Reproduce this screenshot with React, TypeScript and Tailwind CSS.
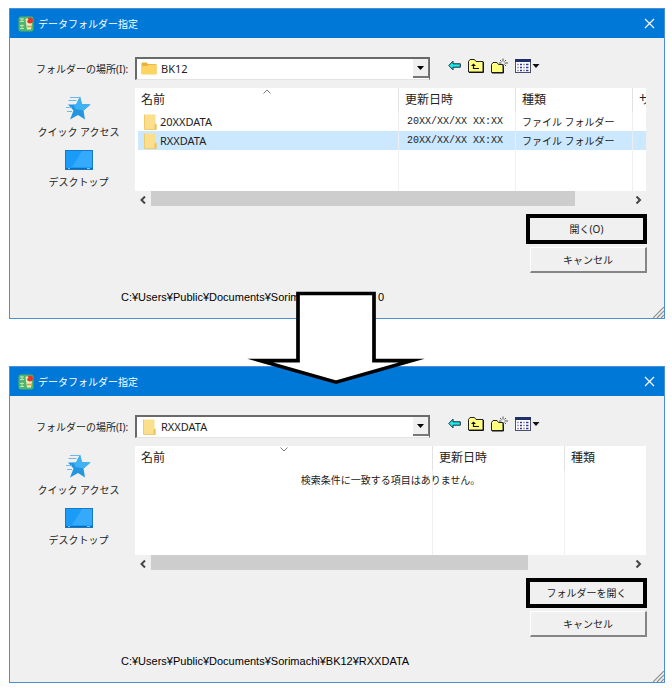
import { useId } from 'react'
import type { ReactNode } from 'react'

type Column = { label: string; width: string; sort?: 'up' | 'down' }
type Row = { name: string; date: string; type: string; selected?: boolean }

const firstColumns: Column[] = [
  { label: '名前', width: 'w-[263px]', sort: 'up' },
  { label: '更新日時', width: 'w-[117px]' },
  { label: '種類', width: 'w-[117px]' },
  { label: 'サ', width: 'w-auto' },
]

const secondColumns: Column[] = [
  { label: '名前', width: 'w-[297px]', sort: 'down' },
  { label: '更新日時', width: 'w-[132px]' },
  { label: '種類', width: 'w-auto' },
]

const rows: Row[] = [
  { name: '20XXDATA', date: '20XX/XX/XX XX:XX', type: 'ファイル フォルダー' },
  { name: 'RXXDATA', date: '20XX/XX/XX XX:XX', type: 'ファイル フォルダー', selected: true },
]

function AppIcon() {
  return (
    <svg width="16" height="16" viewBox="0 0 16 16" aria-hidden="true">
      <rect x="0.5" y="0.5" width="15" height="15" rx="2.5" fill="#4fb56a" />
      <path d="M2 3h4M2 5.500h4M4 2v4M2 9.500h4M2 12.500h4M4 8.500v4.500" stroke="#b9e6b4" strokeWidth="1" fill="none" />
      <path d="M7.500 3.500h7l-1.500 10h-4z" fill="#e6edbf" />
      <circle cx="12" cy="4.500" r="3" fill="#e0372b" />
      <circle cx="9" cy="3.500" r="1.300" fill="#f3e3a0" />
      <path d="M9 10.500h4.500" stroke="#e79a3c" strokeWidth="1.500" />
    </svg>
  )
}

function FolderIcon() {
  return (
    <svg width="16" height="13" viewBox="0 0 16 13" aria-hidden="true">
      <path d="M0.500 1.500q0-1 1-1h4l1.500 1.500h7.500q1 0 1 1V12h-15z" fill="#e9b23f" />
      <path d="M0.500 4h6l1.200-1.200h7.800V12q0 0.500-0.500 0.500H1q-0.500 0-0.500-0.500z" fill="#fcd462" />
    </svg>
  )
}

function FolderClosedIcon() {
  return (
    <svg width="13" height="16" viewBox="0 0 13 16" aria-hidden="true">
      <path d="M0.500 0.500h11v9l1 1v5h-12z" fill="#fbdf8c" />
      <path d="M11.500 9.500l1 1v5H10.500v-4.500z" fill="#ebc25c" />
      <path d="M0.500 0.500V15.500h12" stroke="#f0cb6c" fill="none" />
    </svg>
  )
}

function StarIcon() {
  return (
    <svg width="26" height="24" viewBox="0 0 26 24" aria-hidden="true">
      <path d="M15 0.500l2 7.500 8.500 0.500-7 6 1.500 9-7-4.500-8 4.500 3.500-9-5.500-6h8z" fill="#2496e0" />
      <path d="M15 0.500l2 7.500 8.500 0.500-7 6-8-1.500-2-4.500h3z" fill="#3fb2f4" />
      <path d="M5 1.500h9M3.500 4.500h8M1 11.500h6M2 15.500h5" stroke="#6bb9e8" strokeWidth="1" />
    </svg>
  )
}

function DesktopIcon() {
  return (
    <svg width="28" height="20" viewBox="0 0 28 20" aria-hidden="true">
      <rect x="0.500" y="0.500" width="27" height="19" fill="#1a9bf8" stroke="#1679c4" />
      <path d="M17 1h10v16H7z" fill="#35a9fb" />
      <path d="M1 18.500h26" stroke="#1269ad" strokeWidth="1" />
      <path d="M3 18.500h2M22 18.500h3" stroke="#78c6fa" strokeWidth="1" />
    </svg>
  )
}

function BackIcon() {
  return (
    <svg width="13" height="11" viewBox="0 0 13 11" aria-hidden="true">
      <path d="M0.800 5.500L5 1.200v2.600h7.300v3.400H5v2.600z" fill="#1feaea" stroke="#102a3a" strokeWidth="1" />
    </svg>
  )
}

function UpIcon() {
  return (
    <svg width="16" height="14" viewBox="0 0 16 14" aria-hidden="true">
      <path d="M0.500 13V2.500L2 0.500h4.500L8 2.500h7v10.500z" fill="#ffff80" stroke="#222" />
      <path d="M1 13.500h14.500V3" stroke="#111" fill="none" />
      <path d="M5.500 5v4.500H11" stroke="#111" strokeWidth="1.200" fill="none" />
      <path d="M3 7l2.500-2.500L8 7z" fill="#111" />
    </svg>
  )
}

function NewFolderIcon() {
  return (
    <svg width="17" height="16" viewBox="0 0 17 16" aria-hidden="true">
      <path d="M0.500 14.500V6.500L2 4.500h4l1.500 2h4.500v8z" fill="#ffff80" stroke="#222" />
      <path d="M1 15h11.500V7" stroke="#111" fill="none" />
      <path d="M12 0.500v3M12 6.500v3M8 5h2.500M13.500 5H17M9 2l1.500 1.500M15 2l-1.500 1.500M13.500 6.500L15 8" stroke="#555" strokeWidth="1" />
    </svg>
  )
}

function ViewsIcon() {
  return (
    <svg width="26" height="14" viewBox="0 0 26 14" aria-hidden="true">
      <rect x="0.500" y="0.500" width="15" height="13" fill="#fff" stroke="#4a5068" />
      <path d="M0 1.500h16" stroke="#1f2f6b" strokeWidth="3" />
      <path d="M2.500 5.500h1M5 5.500h2M8.500 5.500h1M11 5.500h2.500M2.500 8.500h1M5 8.500h2M8.500 8.500h1M11 8.500h2.500M2.500 11.500h1M5 11.500h2M8.500 11.500h1M11 11.500h2.500" stroke="#3a3a90" strokeWidth="1.400" />
      <path d="M17.500 5h7L21 9z" fill="#111" />
    </svg>
  )
}

function SortMark({ direction }: { direction: 'up' | 'down' }) {
  return (
    <svg className="absolute left-1/2 top-px -translate-x-1/2" width="9" height="5" viewBox="0 0 9 5" aria-hidden="true">
      <path d={direction === 'up' ? 'M1 4.500l3.500-3.500 3.500 3.500' : 'M1 0.500l3.500 3.500 3.500-3.500'} fill="none" stroke="#777" />
    </svg>
  )
}

function LocationSelect({ id, value, icon }: { id: string; value: string; icon: ReactNode }) {
  return (
    <div className="relative w-[295px] shrink-0">
      <select
        id={id}
        className="block h-[23px] w-full appearance-none border-2 border-b border-r border-b-[#e3e3e3] border-r-[#696969] border-l-[#696969] border-t-[#696969] bg-white pl-6 pr-5 text-[11px] leading-4 text-[#222] outline-none"
      >
        <option>{value}</option>
      </select>
      <span className="pointer-events-none absolute inset-y-0 left-1 flex w-5 items-center justify-center">{icon}</span>
      <span className="pointer-events-none absolute bottom-0.5 right-px top-0.5 flex w-4 items-center justify-center border-b-2 border-r border-[#777] bg-[#f0f0f0]">
        <svg width="7" height="4" viewBox="0 0 7 4" aria-hidden="true">
          <path d="M0 0h7L3.500 4z" fill="#000" />
        </svg>
      </span>
    </div>
  )
}

function Toolbar() {
  return (
    <div className="flex items-center gap-[7px] pb-1.5 pl-[18px]">
      <button type="button" aria-label="戻る"><BackIcon /></button>
      <button type="button" aria-label="上へ"><UpIcon /></button>
      <button type="button" aria-label="新規"><NewFolderIcon /></button>
      <button type="button" aria-label="表示"><ViewsIcon /></button>
    </div>
  )
}

function FileList({ columns, items, message }: { columns: Column[]; items: Row[]; message?: string }) {
  return (
    <div className="relative overflow-hidden bg-white">
      <table className="w-full table-fixed border-separate border-spacing-0 text-left">
        <thead>
          <tr className="h-6">
            {columns.map((c, i) => (
              <th
                key={c.label}
                className={`relative overflow-hidden whitespace-nowrap py-0 pl-1.5 pr-0 text-[12px] font-normal leading-4 ${c.width} ${
                  i > 0 ? 'border-l border-[#e2e2e2]' : ''
                }`}
              >
                {c.sort && <SortMark direction={c.sort} />}
                {c.label}
              </th>
            ))}
          </tr>
        </thead>
        <tbody>
          {items.map(item => (
            <tr key={item.name} className={`h-[19px] ${item.selected ? 'bg-[#cce8ff]' : ''}`}>
              <td className="border-l-[3px] border-white py-0 pl-1.5">
                <span className="flex items-center gap-[3px] text-[11px] leading-4">
                  <FolderClosedIcon />
                  {item.name}
                </span>
              </td>
              <td className="whitespace-nowrap border-l border-[#eee] py-0 pl-2 pr-0 font-['Liberation_Mono','Noto_Sans_CJK_JP',monospace] text-[10px] leading-4">
                {item.date}
              </td>
              <td className="whitespace-nowrap border-l border-[#eee] py-0 pl-1.5 pr-0 text-[10px] leading-4">{item.type}</td>
              <td className="border-l border-[#eee] p-0" />
            </tr>
          ))}
          <tr className={items.length > 0 ? 'h-[41px]' : 'h-[85px]'}>
            {columns.map((c, i) => (
              <td key={c.label} className={i > 0 ? 'border-l border-[#f0f0f0] p-0' : 'p-0'} />
            ))}
          </tr>
        </tbody>
      </table>
      {message && <p className="absolute inset-x-0 top-[26px] text-center text-[10px] leading-4">{message}</p>}
    </div>
  )
}

function ScrollBar({ thumb }: { thumb: number }) {
  return (
    <div className="flex h-[17px] items-stretch">
      <button type="button" aria-label="左" className="flex w-4 items-center justify-center">
        <svg width="7" height="8" viewBox="0 0 7 8" aria-hidden="true">
          <path d="M5 0.500L1.500 4L5 7.500" fill="none" stroke="#444" strokeWidth="2" />
        </svg>
      </button>
      <div className="flex-1 pb-0.5">
        <div className="h-full bg-[#cdcdcd]" style={{ width: `${thumb}%` }} />
      </div>
      <button type="button" aria-label="右" className="flex w-4 items-center justify-center">
        <svg width="7" height="8" viewBox="0 0 7 8" aria-hidden="true">
          <path d="M1.500 0.500L5 4L1.500 7.500" fill="none" stroke="#444" strokeWidth="2" />
        </svg>
      </button>
    </div>
  )
}

type DialogProps = {
  location: string
  locationIcon: ReactNode
  columns: Column[]
  items: Row[]
  message?: string
  thumb: number
  openLabel: string
  path: ReactNode
}

function FolderDialog({ location, locationIcon, columns, items, message, thumb, openLabel, path }: DialogProps) {
  const id = useId()

  return (
    <section className="relative border border-[#4a90d9] bg-[#f0f0f0]">
      {/* Title bar */}
      <header className="flex h-[29px] items-center bg-[#0078d7] pl-2 pr-[9px] text-white">
        <AppIcon />
        <h1 className="flex-1 pl-1 text-[10px] leading-4">データフォルダー指定</h1>
        <button type="button" aria-label="閉じる">
          <svg width="11" height="11" viewBox="0 0 11 11" aria-hidden="true">
            <path d="M1 1l9 9M10 1l-9 9" stroke="#fff" strokeWidth="1.200" />
          </svg>
        </button>
      </header>

      <div className="grid grid-cols-[125px_1fr] pr-[18px] pt-[19px]">
        <label htmlFor={id} className="self-center whitespace-nowrap pl-[26px] text-[10px] leading-4">
          フォルダーの場所(I):
        </label>
        <div className="flex">
          <LocationSelect id={id} value={location} icon={locationIcon} />
          <Toolbar />
        </div>
      </div>

      <div className="grid grid-cols-[125px_1fr] items-start pr-[18px] pt-2">
        {/* Places */}
        <nav className="flex flex-col items-center pl-3 pt-2">
          <a href="#quick" className="flex flex-col items-center gap-1 whitespace-nowrap text-[10px] leading-4">
            <StarIcon />
            クイック アクセス
          </a>
          <a href="#desktop" className="mt-2.5 flex flex-col items-center gap-1 whitespace-nowrap text-[10px] leading-4">
            <DesktopIcon />
            デスクトップ
          </a>
        </nav>

        <div className="min-w-0">
          <FileList columns={columns} items={items} message={message} />
          <ScrollBar thumb={thumb} />
        </div>
      </div>

      {/* Actions */}
      <div className="flex flex-col items-end gap-[3px] pr-[17px] pt-1.5">
        <button type="button" className="h-[30px] w-[121px] border-4 border-black text-[10px] leading-4">
          {openLabel}
        </button>
        <button
          type="button"
          className="h-[26px] w-[117px] border-b-2 border-l border-r-2 border-t border-b-[#858585] border-l-white border-r-[#858585] border-t-white text-[10px] leading-4"
        >
          キャンセル
        </button>
      </div>

      <p className="flex whitespace-nowrap pb-[13px] pl-[111px] pt-4 font-['Liberation_Sans','Noto_Sans_CJK_JP',sans-serif] text-[11px] leading-4 text-black">
        {path}
      </p>

      <svg className="absolute bottom-0 right-0" width="11" height="11" viewBox="0 0 11 11" aria-hidden="true">
        <path d="M0 11L11 0M4 11l7-7M8 11l3-3" stroke="#8f8f8f" strokeWidth="1.200" />
      </svg>
    </section>
  )
}

export default function App() {
  return (
    <main className="relative flex min-h-screen flex-col gap-[47px] bg-white pb-1 pl-[9px] pr-[7px] pt-2 font-['Noto_Sans','Noto_Sans_CJK_JP',sans-serif] text-[#222]">
      <FolderDialog
        location="BK12"
        locationIcon={<FolderIcon />}
        columns={firstColumns}
        items={rows}
        thumb={88.5}
        openLabel="開く(O)"
        path={
          <>
            <span className="w-[257px]">C:¥Users¥Public¥Documents¥Sorim</span>
            <span>0</span>
          </>
        }
      />
      <FolderDialog
        location="RXXDATA"
        locationIcon={<FolderClosedIcon />}
        columns={secondColumns}
        items={[]}
        message="検索条件に一致する項目はありません。"
        thumb={78.7}
        openLabel="フォルダーを開く"
        path="C:¥Users¥Public¥Documents¥Sorimachi¥BK12¥RXXDATA"
      />

      {/* Arrow from the first dialog to the second */}
      <svg className="absolute left-1/2 top-[290px] -translate-x-1/2" width="180" height="96" viewBox="0 0 180 96" aria-hidden="true">
        <path
          d="M52 3.500H128V70.700H165.500L90 92.200L14.500 70.700H52z"
          fill="#fff"
          stroke="#000"
          strokeWidth="3.700"
          strokeMiterlimit="12"
        />
      </svg>
    </main>
  )
}
